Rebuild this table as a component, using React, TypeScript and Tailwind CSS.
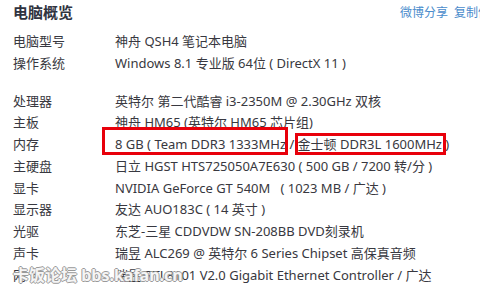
const rows: [string, string][] = [
  ['电脑型号', '神舟 QSH4 笔记本电脑'],
  ['操作系统', 'Windows 8.1 专业版 64位 ( DirectX 11 )'],
];

const hardware: [string, string][] = [
  ['处理器', '英特尔 第二代酷睿 i3-2350M @ 2.30GHz 双核'],
  ['主板', '神舟 HM65 (英特尔 HM65 芯片组)'],
  ['内存', '8 GB ( Team DDR3 1333MHz / 金士顿 DDR3L 1600MHz )'],
  ['主硬盘', '日立 HGST HTS725050A7E630 ( 500 GB / 7200 转/分 )'],
  ['显卡', 'NVIDIA GeForce GT 540M   ( 1023 MB / 广达 )'],
  ['显示器', '友达 AUO183C ( 14 英寸 )'],
  ['光驱', '东芝-三星 CDDVDW SN-208BB DVD刻录机'],
  ['声卡', '瑞昱 ALC269 @ 英特尔 6 Series Chipset 高保真音频'],
  ['网卡', '瑞昱 RTL8101 V2.0 Gigabit Ethernet Controller / 广达'],
];

function Row({ label, value }: { label: string; value: string }) {
  return (
    <div className="flex h-[21.75px] items-center whitespace-pre">
      <div className="w-[102px] shrink-0">{label}</div>
      <div>{value}</div>
    </div>
  );
}

export default function App() {
  return (
    <div
      className="relative h-[293px] w-[480px] overflow-hidden bg-white pl-[13px] text-[13px] text-[#383840]"
      style={{ fontFamily: '"Noto Sans", "Noto Sans CJK SC", sans-serif' }}
    >
      <div className="flex h-[25px] items-center justify-between">
        <h1 className="text-[15px] font-bold text-[#2f3340]">电脑概览</h1>
        <div className="flex shrink-0 translate-x-[22px] gap-[6px] whitespace-nowrap text-[12px] text-[#4a8ccc]">
          <span>微博分享</span>
          <span>复制信息</span>
        </div>
      </div>

      <div className="mt-[6px]">
        {rows.map(([l, v]) => (
          <Row key={l} label={l} value={v} />
        ))}
      </div>
      <div className="mt-[16px]">
        {hardware.map(([l, v]) => (
          <Row key={l} label={l} value={v} />
        ))}
      </div>

      {/* annotation boxes */}
      <div className="absolute left-[102px] top-[127px] h-[28px] w-[186px] border-[3px] border-[#e8000b]" />
      <div className="absolute left-[295px] top-[133px] h-[22px] w-[151px] border-[3px] border-[#e8000b]" />

      {/* watermark */}
      <div className="absolute left-[13px] top-[263px] text-[16px] font-bold text-white/90 [text-shadow:1px_0_0_#9a9a9a,-1px_0_0_#9a9a9a,0_1px_0_#9a9a9a,0_-1px_0_#9a9a9a]">
        卡饭论坛 bbs.kafan.cn
      </div>
    </div>
  );
}
